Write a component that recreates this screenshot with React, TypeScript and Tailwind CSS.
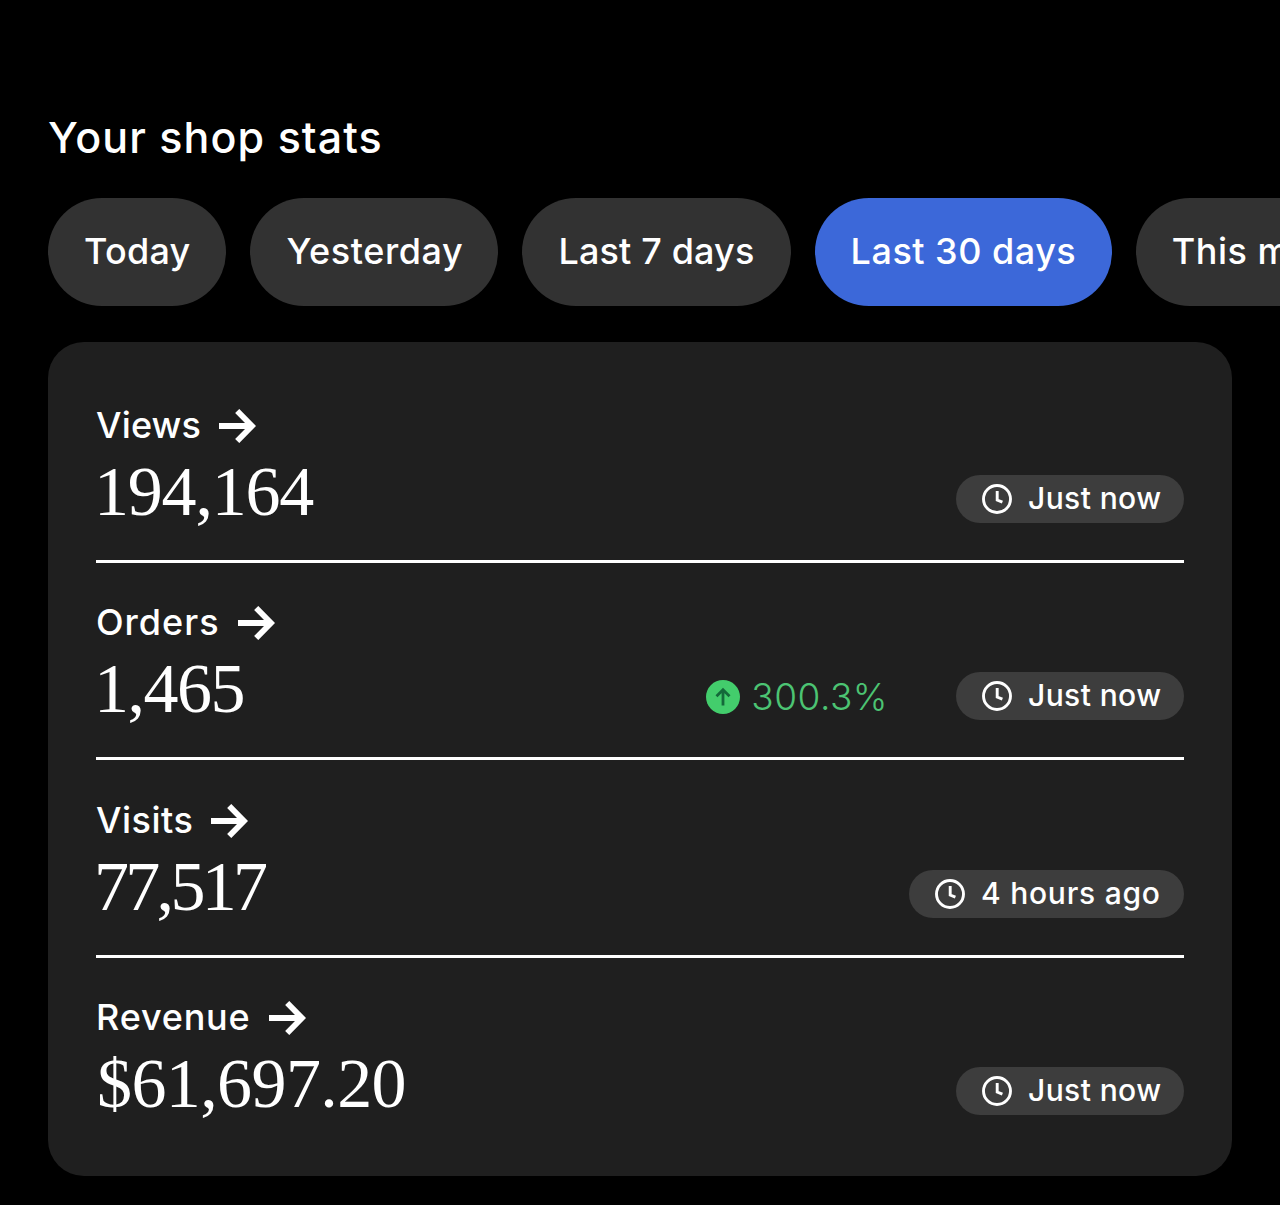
import clsx from 'clsx';

const ranges = [
  { label: 'Today', width: 'w-[178.4px]', tracking: 'tracking-[0.25px]' },
  { label: 'Yesterday', width: 'w-[248px]', tracking: 'tracking-[0.6px]' },
  { label: 'Last 7 days', width: 'w-[268.2px]', tracking: 'tracking-[0.15px]' },
  { label: 'Last 30 days', width: 'w-[297.2px]', tracking: 'tracking-[0.5px]', active: true },
  { label: 'This month', width: 'w-[270px]', tracking: 'tracking-[0.5px]' },
];

const stats = [
  { label: 'Views', labelTracking: 'tracking-[0.15px]', value: '194,164', valueClass: '-ml-[2px] tracking-[-1.2px]', updated: 'Just now', badge: 'w-[228px] tracking-[0.4px]' },
  { label: 'Orders', labelTracking: 'tracking-[1px]', value: '1,465', valueClass: '-ml-[2px] tracking-[-1.5px]', change: '300.3%', updated: 'Just now', badge: 'w-[228px] tracking-[0.4px]' },
  { label: 'Visits', labelTracking: 'tracking-[0.5px]', value: '77,517', valueClass: '-ml-[2px] tracking-[-3.7px]', updated: '4 hours ago', badge: 'w-[275px] tracking-[0.75px]' },
  { label: 'Revenue', labelTracking: 'tracking-[0.8px]', value: '$61,697.20', valueClass: 'ml-px tracking-[-0.6px]', updated: 'Just now', badge: 'w-[228px] tracking-[0.4px]' },
];

function ArrowRight() {
  return <svg width="37" height="34" viewBox="0 0 37 34" fill="none" stroke="currentColor" strokeWidth="5.8"><path d="M0 17H33M18.2 2L33 17L18.2 32" /></svg>;
}

function Clock() {
  return <svg width="30" height="30" viewBox="0 0 30 30" fill="none" stroke="currentColor" strokeWidth="2.9"><circle cx="15" cy="15" r="13.5" /><path d="M15.2 7V16L20.4 18.2" /></svg>;
}

function Change({ value }: { value: string }) {
  return <div className="mr-[68px] flex h-[47px] items-center gap-[11px] text-[#4cc473]">
    <svg width="34" height="34" viewBox="0 0 34 34" fill="none"><circle cx="17" cy="17" r="17" fill="#43cd6c" /><path d="M17 25.5V10M10.5 16.2L17 9.7L23.5 16.2" stroke="#14693a" strokeWidth="2.8" /></svg>
    <span className="text-[37px] leading-[48px] font-light tracking-[0.5px]">{value}</span>
  </div>;
}

export default function App() {
  return <div className="h-[1205px] w-[1280px] overflow-hidden bg-black pt-[111px] font-[Inter,sans-serif] text-white">
    <h1 className="ml-[48px] h-[87px] text-[43px] leading-[52px] font-medium tracking-[1.05px] whitespace-nowrap">Your shop stats</h1>

    <div className="ml-[48px] flex gap-[24px]">
      {ranges.map((r) => <button key={r.label} className={clsx('h-[108px] shrink-0 rounded-full pb-[2px] pl-[36px] text-left text-[36px] font-medium whitespace-nowrap', r.width, r.tracking, r.active ? 'bg-[#3c68d9]' : 'bg-[#323232]')}>{r.label}</button>)}
    </div>

    <div className="mx-[48px] mt-[36px] h-[834px] rounded-[36px] bg-[#1f1f1f] px-[48px] py-[23.5px]">
      {stats.map((s) => <div key={s.label} className="flex h-[197.4px] items-end border-b-[3px] border-white pb-[37px] last:h-[194.4px] last:border-b-0">
        <div className="flex flex-1 flex-col">
          <div className="flex h-[48px] items-center gap-[18px]">
            <span className={clsx('pb-[2px] text-[36px] leading-[46px] font-medium', s.labelTracking)}>{s.label}</span>
            <ArrowRight />
          </div>
          <span className={clsx('h-[73px] font-["Liberation_Serif",serif] text-[70px] leading-[84px]', s.valueClass)}>{s.value}</span>
        </div>
        {s.change && <Change value={s.change} />}
        <div className={clsx('flex h-[48px] items-center gap-[16px] rounded-full bg-[#3d3d3d] pl-[26px] text-[30px] font-medium whitespace-nowrap', s.badge)}>
          <Clock />
          <span className="pb-[2px] leading-[46px]">{s.updated}</span>
        </div>
      </div>)}
    </div>
  </div>;
}
